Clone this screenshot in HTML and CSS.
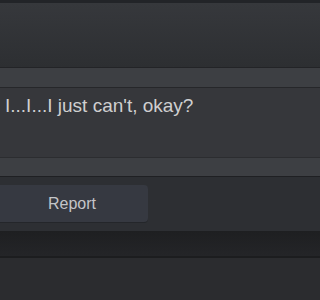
FILE: index.html
```html
<!DOCTYPE html>
<html>
<head>
<meta charset="utf-8">
<link rel="stylesheet" href="styles.css">
</head>
<body>
<div class="page">
  <div class="topstrip"></div>
  <div class="header"></div>
  <div class="band"></div>
  <div class="message">I...I...I just can't, okay?</div>
  <div class="band band-low"></div>
  <div class="actions">
    <button class="btn">Report</button>
  </div>
  <div class="darkbar"></div>
  <div class="footer"></div>
</div>
</body>
</html>
```
FILE: styles.css
```css
html, body {
  margin: 0;
  padding: 0;
  background: #2b2c2f;
}
.page {
  width: 100%;
  height: 300px;
  overflow: hidden;
  display: flex;
  flex-direction: column;
  font-family: "Liberation Sans", Arial, sans-serif;
}
.topstrip {
  height: 3px;
  background: #222428;
}
.header {
  height: 64px;
  background: linear-gradient(#36383c, #2d2f32);
  border-bottom: 1px solid #232427;
}
.band {
  height: 19px;
  background: #3d3f43;
  border-bottom: 1px solid #26272a;
}
.message {
  height: 70px;
  background: #36373b;
  color: #cfcfd0;
  font-size: 19px;
  line-height: 22px;
  padding: 7px 0 0 5px;
  box-sizing: border-box;
  border-bottom: 1px solid #2c2d30;
}
.band-low {
  height: 18px;
  border-bottom: 1px solid #1f2023;
}
.actions {
  height: 54px;
  background: #2d2f33;
  padding-top: 8px;
  box-sizing: border-box;
}
.btn {
  display: block;
  margin-left: -4px;
  width: 152px;
  height: 37px;
  background: #363941;
  border: none;
  border-radius: 4px;
  box-shadow: 0 1px 0 #24262a;
  color: #c4c5c8;
  font-family: "Liberation Sans", Arial, sans-serif;
  font-size: 16px;
  padding: 0;
}
.darkbar {
  height: 25px;
  background: linear-gradient(#1e1f21, #242528);
  border-bottom: 2px solid #1c1d1f;
}
.footer {
  flex: 1;
  background: #2b2c2f;
}
```
